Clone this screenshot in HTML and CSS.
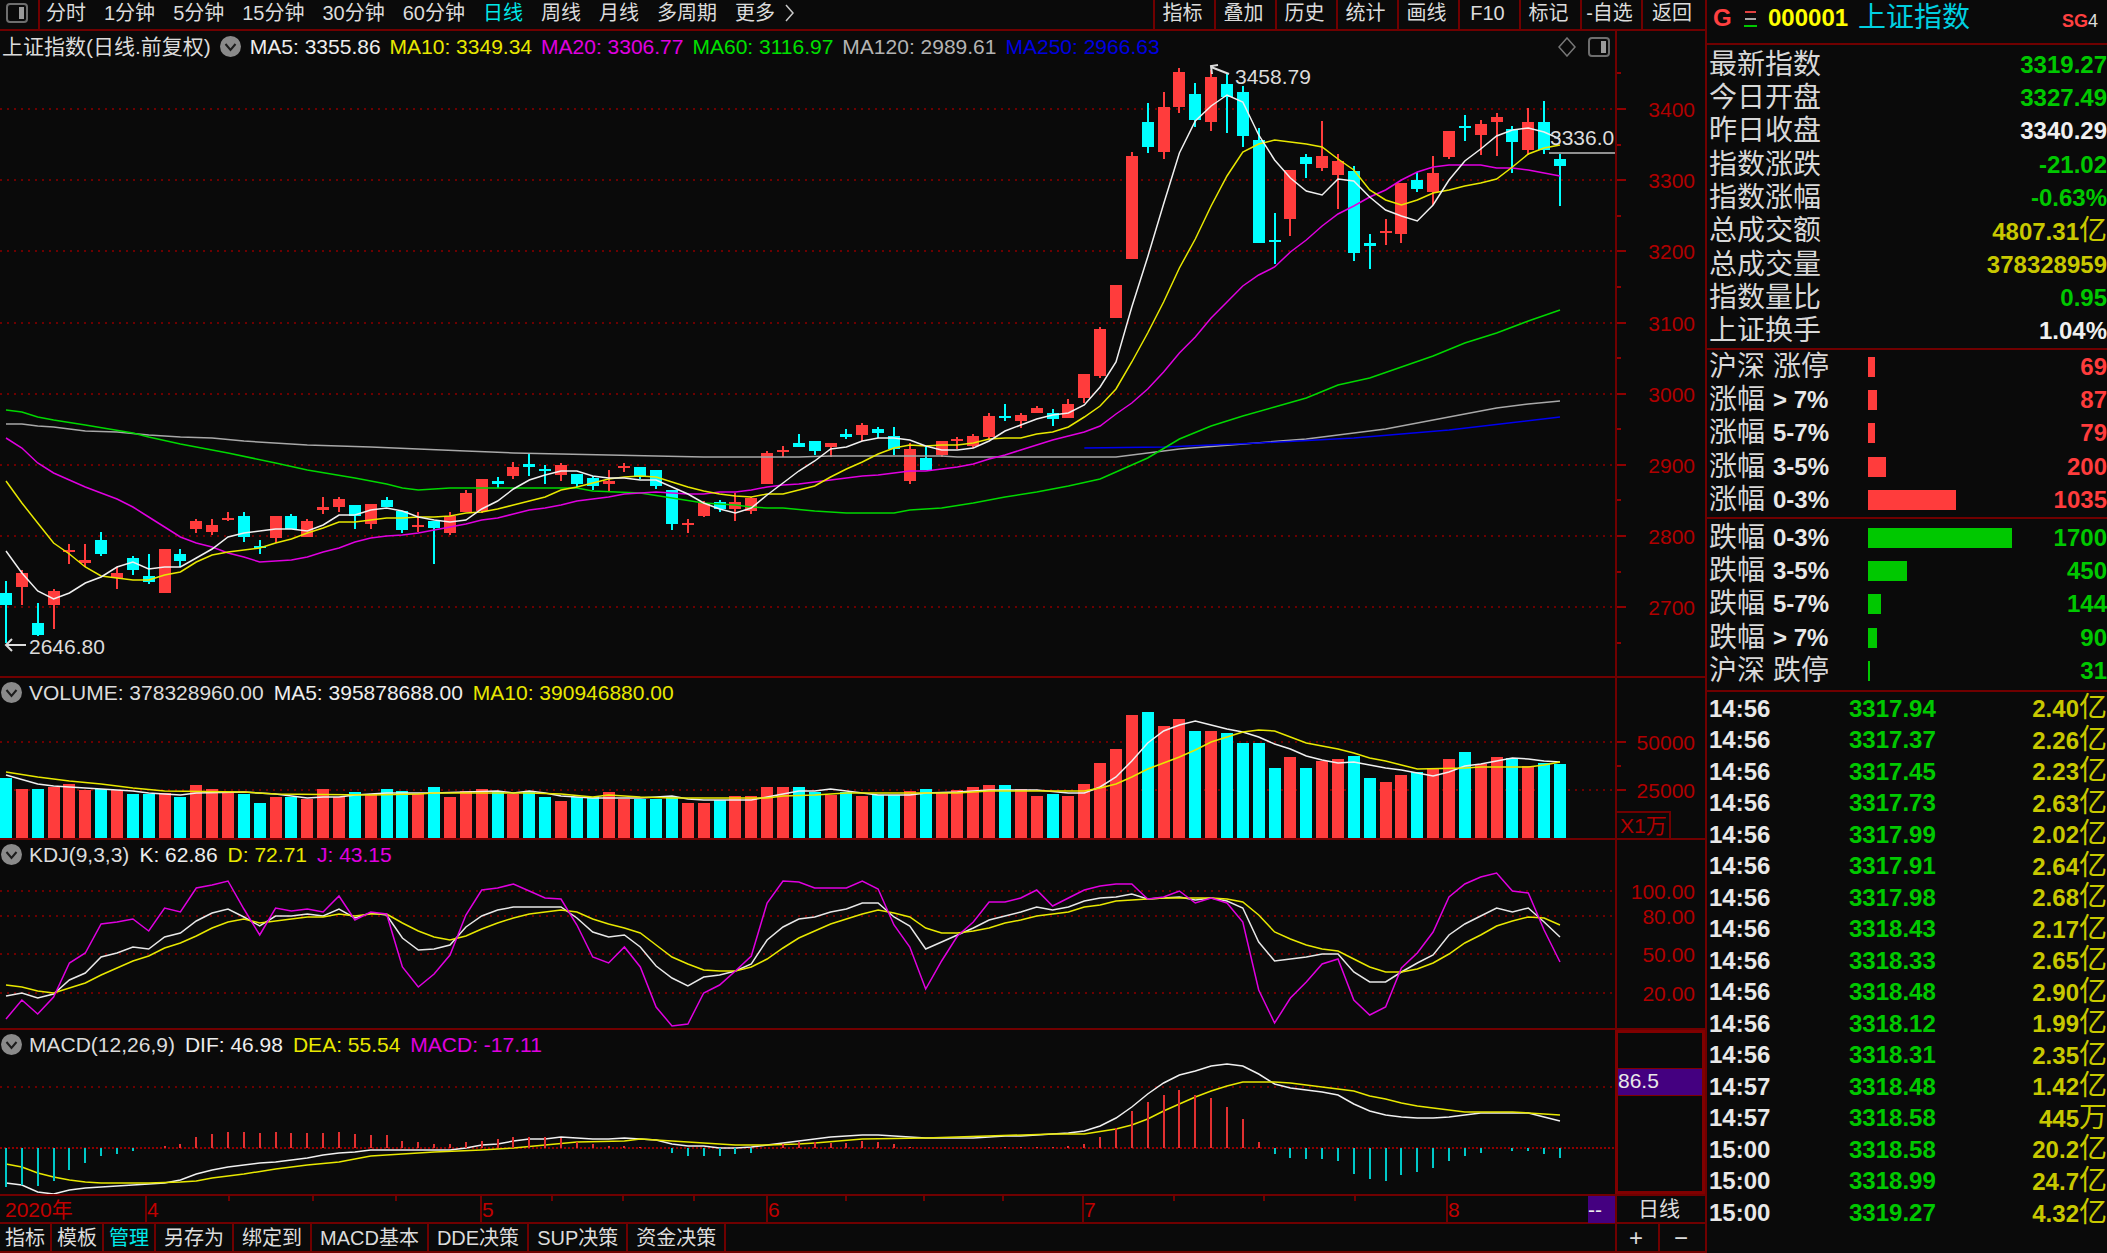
FILE: index.html
```html
<!DOCTYPE html>
<html lang="zh-CN">
<head>
<meta charset="utf-8">
<title>上证指数 000001 日线</title>
<link rel="stylesheet" href="styles.css">
</head>
<body>
<svg class="defs" aria-hidden="true">
  <symbol id="chevron" viewBox="0 0 21 21"><circle cx="10.500" cy="10.500" r="10.500" fill="#8a8a8a"/><path d="M5.500 8l5 6 5-6" fill="none" stroke="#1c1c1c" stroke-width="2"/></symbol>
  <symbol id="panel" viewBox="0 0 22 20"><rect x="1" y="1" width="20" height="18" rx="3" fill="none" stroke="#6e6e6e" stroke-width="2"/><rect x="13" y="4" width="5" height="12" fill="#9a9a9a"/></symbol>
</svg>
<div class="app">
  <main class="workspace">
    <header class="toolbar">
      <button class="toggle" aria-label="侧栏"><svg width="22" height="20"><use href="#panel"/></svg></button>
      <nav class="periods">
        <button>分时</button><button>1分钟</button><button>5分钟</button><button>15分钟</button><button>30分钟</button><button>60分钟</button><button class="active">日线</button><button>周线</button><button>月线</button><button>多周期</button><button class="more">更多<svg width="10" height="18" viewBox="0 0 10 18"><path d="M1 1l7 8-7 8" fill="none" stroke="#c8c8c8" stroke-width="1.500"/></svg></button>
      </nav>
      <nav class="tools">
        <button>指标</button><button>叠加</button><button>历史</button><button>统计</button><button>画线</button><button>F10</button><button>标记</button><button>-自选</button><button>返回</button>
      </nav>
    </header>

    <section class="panel">
      <div class="plot" id="price">
        <div class="legend legend-main">
          <span>上证指数(日线.前复权)</span><svg width="21" height="21"><use href="#chevron"/></svg>
          <span class="white">MA5: 3355.86</span><span class="yellow">MA10: 3349.34</span><span class="magenta">MA20: 3306.77</span><span class="green">MA60: 3116.97</span><span class="gray">MA120: 2989.61</span><span class="blue">MA250: 2966.63</span>
          <span class="view-icons"><svg width="18" height="20" viewBox="0 0 18 20"><path d="M9 1l8 9-8 9-8-9z" fill="none" stroke="#777" stroke-width="1.500"/></svg><svg width="22" height="20"><use href="#panel"/></svg></span>
        </div>
      </div>
      <div class="axis" id="price-axis"></div>
    </section>

    <section class="panel">
      <div class="plot" id="volume">
        <div class="legend"><svg width="21" height="21"><use href="#chevron"/></svg><span class="first">VOLUME: 378328960.00</span><span class="white">MA5: 395878688.00</span><span class="yellow">MA10: 390946880.00</span></div>
      </div>
      <div class="axis" id="volume-axis"><span class="unit">X1万</span></div>
    </section>

    <section class="panel">
      <div class="plot" id="kdj">
        <div class="legend"><svg width="21" height="21"><use href="#chevron"/></svg><span class="first">KDJ(9,3,3)</span><span class="white">K: 62.86</span><span class="yellow">D: 72.71</span><span class="magenta">J: 43.15</span></div>
      </div>
      <div class="axis" id="kdj-axis"></div>
    </section>

    <section class="panel">
      <div class="plot" id="macd">
        <div class="legend"><svg width="21" height="21"><use href="#chevron"/></svg><span class="first">MACD(12,26,9)</span><span class="white">DIF: 46.98</span><span class="yellow">DEA: 55.54</span><span class="magenta">MACD: -17.11</span></div>
      </div>
      <div class="axis selected"><span class="cursor-value">86.5</span></div>
    </section>

    <div class="dates">
      <div class="months">
        <div class="month start">2020年</div>
        <div class="month"><b>4</b><i></i><i></i><i></i></div>
        <div class="month"><b>5</b><i></i><i></i><i></i></div>
        <div class="month"><b>6</b><i></i><i></i><i></i></div>
        <div class="month"><b>7</b><i></i><i></i><i></i></div>
        <div class="month"><b>8</b></div>
        <div class="cursor-date">--</div>
      </div>
      <div class="period-name">日线</div>
    </div>

    <footer class="bottom">
      <nav class="tabs">
        <button class="tight">指标</button><button class="tight">模板</button><button class="tight active">管理</button><button>另存为</button><button>绑定到</button><button>MACD基本</button><button>DDE决策</button><button>SUP决策</button><button>资金决策</button>
      </nav>
      <div class="zoom"><button aria-label="放大">+</button><button aria-label="缩小">−</button></div>
    </footer>
  </main>

  <aside class="quote">
    <header class="quote-head">
      <b class="mark">G</b>
      <svg width="13" height="17" viewBox="0 0 13 17"><path d="M1 2h11" stroke="#e04040" stroke-width="2"/><path d="M1 9h11" stroke="#aaa" stroke-width="2"/><path d="M0 16h13" stroke="#00c800" stroke-width="2"/></svg>
      <b class="code">000001</b><span class="name">上证指数</span><span class="sg"><b>SG</b>4</span>
    </header>
    <dl class="stats">
      <div><dt>最新指数</dt><dd class="down">3319.27</dd></div>
      <div><dt>今日开盘</dt><dd class="down">3327.49</dd></div>
      <div><dt>昨日收盘</dt><dd>3340.29</dd></div>
      <div><dt>指数涨跌</dt><dd class="down">-21.02</dd></div>
      <div><dt>指数涨幅</dt><dd class="down">-0.63%</dd></div>
      <div><dt>总成交额</dt><dd class="sum">4807.31<span>亿</span></dd></div>
      <div><dt>总成交量</dt><dd class="sum">378328959</dd></div>
      <div><dt>指数量比</dt><dd class="down">0.95</dd></div>
      <div><dt>上证换手</dt><dd>1.04%</dd></div>
    </dl>
    <dl class="spread rise">
      <div><dt>沪深<span>涨停</span></dt><dd><i style="width:7px"></i>69</dd></div>
      <div><dt>涨幅<b>&gt; 7%</b></dt><dd><i style="width:9px"></i>87</dd></div>
      <div><dt>涨幅<b>5-7%</b></dt><dd><i style="width:7px"></i>79</dd></div>
      <div><dt>涨幅<b>3-5%</b></dt><dd><i style="width:18px"></i>200</dd></div>
      <div><dt>涨幅<b>0-3%</b></dt><dd><i style="width:88px"></i>1035</dd></div>
    </dl>
    <dl class="spread fall">
      <div><dt>跌幅<b>0-3%</b></dt><dd><i style="width:144px"></i>1700</dd></div>
      <div><dt>跌幅<b>3-5%</b></dt><dd><i style="width:39px"></i>450</dd></div>
      <div><dt>跌幅<b>5-7%</b></dt><dd><i style="width:13px"></i>144</dd></div>
      <div><dt>跌幅<b>&gt; 7%</b></dt><dd><i style="width:9px"></i>90</dd></div>
      <div><dt>沪深<span>跌停</span></dt><dd><i style="width:2px"></i>31</dd></div>
    </dl>
    <table class="trades"><tbody>
      <tr><td>14:56</td><td>3317.94</td><td>2.40<span>亿</span></td></tr>
      <tr><td>14:56</td><td>3317.37</td><td>2.26<span>亿</span></td></tr>
      <tr><td>14:56</td><td>3317.45</td><td>2.23<span>亿</span></td></tr>
      <tr><td>14:56</td><td>3317.73</td><td>2.63<span>亿</span></td></tr>
      <tr><td>14:56</td><td>3317.99</td><td>2.02<span>亿</span></td></tr>
      <tr><td>14:56</td><td>3317.91</td><td>2.64<span>亿</span></td></tr>
      <tr><td>14:56</td><td>3317.98</td><td>2.68<span>亿</span></td></tr>
      <tr><td>14:56</td><td>3318.43</td><td>2.17<span>亿</span></td></tr>
      <tr><td>14:56</td><td>3318.33</td><td>2.65<span>亿</span></td></tr>
      <tr><td>14:56</td><td>3318.48</td><td>2.90<span>亿</span></td></tr>
      <tr><td>14:56</td><td>3318.12</td><td>1.99<span>亿</span></td></tr>
      <tr><td>14:56</td><td>3318.31</td><td>2.35<span>亿</span></td></tr>
      <tr><td>14:57</td><td>3318.48</td><td>1.42<span>亿</span></td></tr>
      <tr><td>14:57</td><td>3318.58</td><td>445<span>万</span></td></tr>
      <tr><td>15:00</td><td>3318.58</td><td>20.2<span>亿</span></td></tr>
      <tr><td>15:00</td><td>3318.99</td><td>24.7<span>亿</span></td></tr>
      <tr><td>15:00</td><td>3319.27</td><td>4.32<span>亿</span></td></tr>
    </tbody></table>
  </aside>
</div>
<script src="chart.js"></script>
</body>
</html>
```

FILE: styles.css
```css
* { box-sizing: border-box; }

body {
  margin: 0;
  background: #0a0a0a;
  color: #dcdcdc;
  font: 21px/1 "Liberation Sans", "Noto Sans CJK SC", sans-serif;
  overflow-x: hidden;
}

button {
  margin: 0;
  padding: 0;
  border: 0;
  background: none;
  color: inherit;
  font: inherit;
  font-size: 20px;
  white-space: nowrap;
}

dl, dd { margin: 0; }
svg { display: block; flex: none; }
.defs { position: absolute; width: 0; height: 0; }

.white { color: #eeeeee; }
.yellow { color: #e8e800; }
.magenta { color: #e000e0; }
.green { color: #00e000; }
.gray { color: #b4b4b4; }
.blue { color: #0000e0; }
.active { color: #00e8e8; }

.app {
  display: grid;
  grid-template-columns: minmax(0, 1fr) 402px;
  min-height: 100vh;
}

.workspace {
  display: grid;
  grid-template-rows: 31px 647fr 162fr 190fr 166fr 28px 29px;
  min-width: 0;
}

/* top toolbar */
.toolbar {
  display: flex;
  justify-content: space-between;
  border-bottom: 2px solid #700000;
  overflow: hidden;
}
.toggle {
  width: 40px;
  padding: 0 0 4px 6px;
  border-right: 2px solid #700000;
}
.periods {
  display: flex;
  align-items: center;
  gap: 18px;
  flex: 1;
  padding: 0 6px 4px;
}
.more { display: flex; align-items: center; gap: 10px; }
.tools {
  display: grid;
  grid-template-columns: repeat(8, 61px) 64px;
}
.tools button { border-left: 2px solid #700000; padding: 0 4px 4px 0; }

/* chart panels */
.panel {
  display: grid;
  grid-template-columns: minmax(0, 1fr) 90px;
  border-bottom: 2px solid #700000;
}
.plot { position: relative; overflow: hidden; }
.chart {
  position: absolute;
  inset: 0;
  width: 100%;
  height: 100%;
}
.chart * { vector-effect: non-scaling-stroke; }
.chart polyline { fill: none; stroke-width: 1.500; }
.grid { stroke: #6c0000; stroke-width: 2; stroke-dasharray: 2 5; }
.zero { stroke: #900000; stroke-width: 2; stroke-dasharray: 2 2; }
.up { fill: #ff3c3c; stroke: none; }
.dn { fill: #00ffff; stroke: none; }
.hist-up { stroke: #e03030; stroke-width: 2; }
.hist-dn { stroke: #00c8c8; stroke-width: 2; }
.pointer { fill: none; stroke: #dcdcdc; stroke-width: 2; }
.last { stroke: #909090; stroke-width: 2; }
.note {
  position: absolute;
  transform: translateY(-50%);
}

.legend {
  position: relative;
  z-index: 1;
  display: flex;
  align-items: center;
  gap: 10px;
  height: 28px;
  padding-left: 1px;
  white-space: nowrap;
}
.legend-main { gap: 9px; height: 31px; padding-left: 2px; }
.legend .first { margin-left: -3px; }
.view-icons {
  display: flex;
  gap: 12px;
  margin-left: auto;
  padding-right: 5px;
}

.axis {
  position: relative;
  border-left: 2px solid #700000;
  color: #b00000;
}
.axis .value {
  position: absolute;
  right: 10px;
  transform: translateY(-50%);
}
.axis .tick {
  position: absolute;
  left: 0;
  width: 9px;
  height: 2px;
  margin-top: -1px;
  background: #900000;
}
.axis .minor { width: 4px; }
.unit {
  position: absolute;
  left: 0;
  bottom: 0;
  width: 54px;
  height: 27px;
  padding: 2px 0 0 3px;
  border: 2px solid #700000;
  border-width: 2px 2px 0 0;
  white-space: nowrap;
}
.selected { border: 3px solid #800000; }
.cursor-value {
  display: block;
  height: 28px;
  margin-top: 35px;
  border-block: 1px solid #800000;
  background: #440080;
  color: #e8e8e8;
  line-height: 23px;
}

/* date axis */
.dates, .bottom {
  display: grid;
  grid-template-columns: minmax(0, 1fr) 90px;
  border-bottom: 2px solid #700000;
}
.months {
  display: grid;
  grid-template-columns: 145fr 335fr 286fr 316fr 364fr 142fr 27px;
  color: #c00000;
}
.month {
  display: grid;
  grid-template-columns: repeat(4, 1fr);
  border-left: 2px solid #700000;
  position: relative;
}
.month.start { display: block; border: 0; padding: 3px 5px; }
.month b { position: absolute; left: 0; top: 3px; font-weight: 400; }
.month i { height: 5px; border-right: 2px solid #700000; }
.cursor-date { background: #440080; color: #eee; padding-top: 3px; }
.period-name {
  padding-right: 4px;
  border-left: 2px solid #700000;
  line-height: 26px;
  text-align: center;
}

/* bottom tabs */
.tabs { display: flex; }
.tabs button { padding: 0 8px; border-right: 2px solid #700000; }
.tabs .tight { padding: 0 5px; }
.zoom { display: grid; grid-template-columns: 43px 1fr; }
.zoom button { border-left: 2px solid #700000; padding-right: 3px; font-size: 24px; }

/* quote sidebar */
.quote {
  border-left: 2px solid #700000;
  overflow: hidden;
  font-size: 24px;
}
.quote-head {
  display: flex;
  align-items: center;
  height: 45px;
  padding: 0 9px 7px 6px;
  border-bottom: 2px solid #700000;
}
.mark { width: 31px; color: #ff4040; }
.code { margin-left: 11px; color: #ffff00; }
.name { margin-left: 10px; color: #00d0e0; font-size: 28px; }
.sg { margin-left: auto; font-size: 18px; padding-top: 6px; }
.sg b { color: #ff4040; }

.stats, .spread {
  display: grid;
  grid-auto-rows: 1fr;
  padding-left: 2px;
  border-bottom: 2px solid #700000;
}
.stats { height: 305px; padding-top: 3px; }
.rise { height: 169px; }
.fall { height: 173px; padding-top: 2px; padding-bottom: 2px; }
.stats div { display: flex; align-items: center; justify-content: space-between; }
.stats dt, .spread dt { font-size: 28px; color: #d8d8d8; white-space: nowrap; }
.stats dd, .spread dd { font-weight: 700; color: #f0f0f0; }
.stats .down { color: #00c800; }
.stats .sum { color: #c8c800; }
.sum span, .trades span { font-size: 28px; font-weight: 400; line-height: 24px; }
.spread div { display: grid; grid-template-columns: 159px 1fr; align-items: center; }
.spread dt { display: flex; align-items: center; gap: 8px; }
.spread b { font-size: 24px; color: #e8e8e8; }
.spread dd { display: flex; align-items: center; justify-content: space-between; }
.spread dd i { height: 20px; background: currentColor; }
.rise dd { color: #ff3c3c; }
.fall dd { color: #00c800; }

.trades {
  width: 100%;
  height: 536px;
  margin-top: 1px;
  border-collapse: collapse;
  font-weight: 700;
}
.trades td { padding: 0; line-height: 24px; white-space: nowrap; }
.trades td:nth-child(1) { width: 142px; padding-left: 2px; color: #e8e8e8; }
.trades td:nth-child(2) { color: #00c800; }
.trades td:nth-child(3) { color: #c8c800; text-align: right; }
```

FILE: chart.js
```js
// Plot space: 1615 units wide, y grows downwards; 99 trading days.
const W = 1615;
const X = i => 6 + i * 15.857;

// Each day: colour (r up, c down), high, body top, body bottom, low.
const candles = `c581,593,605,643 r570,573,587,605 c603,623,635,636 r589,591,605,629 r544,550,552,564
r544,560,563,567 c532,540,554,556 r567,573,578,589 c556,558,570,575 c554,576,582,584 r549,549,593,593
c549,554,561,567 r519,521,529,533 r519,525,532,535 r512,518,519,521 c512,516,537,542 c540,546,548,554
r516,516,538,543 c514,516,529,529 r519,521,537,537 r497,507,510,514 r497,499,507,512 c505,505,516,529
r504,504,524,529 c497,500,507,507 c511,511,530,533 r512,525,526,532 c521,521,528,564 r512,516,533,535
r490,493,512,512 r479,479,511,513 c477,481,484,488 r462,467,476,479 c454,464,467,476 c465,469,470,484
r463,465,475,481 c474,474,484,487 c476,478,486,490 r470,481,484,491 r463,466,467,472 c467,467,476,479
c470,470,486,489 c490,490,524,530 r519,523,524,533 r501,503,516,517 c500,502,509,512 r493,502,509,521
r497,498,511,514 r451,453,484,484 r446,450,452,457 c434,443,447,447 c441,441,451,455 r443,443,447,457
c429,434,437,439 r423,425,435,441 c427,429,433,438 c427,436,449,455 r443,449,481,484 c447,458,470,470
r441,441,455,457 r437,439,440,449 r434,436,446,448 r413,416,437,440 c404,416,418,421 r413,415,421,428
r406,408,413,413 c409,413,419,426 r399,404,418,418 r374,374,398,403 r327,329,376,378 r285,285,318,318
r152,156,259,259 c103,122,147,153 r92,107,152,159 r68,72,107,113 c83,94,120,127 r70,77,122,131
c73,84,97,133 c86,92,136,147 c128,140,243,243 c213,240,241,264 r170,170,219,236 c154,157,164,178
r121,156,168,171 r154,161,175,209 c166,171,253,261 c234,243,246,269 r219,231,232,245 r183,183,234,243
c172,180,189,192 r156,173,192,205 r131,131,157,159 c115,126,127,141 r120,124,135,155 r113,117,122,156
c126,129,142,173 r108,122,150,155 c101,122,150,154 c153,159,166,206`.split(/\s+/)
  .map(s => [s[0] === 'r' ? 'up' : 'dn', ...s.slice(1).split(',').map(Number)]);

const volumes = `778 789 789 787 784 790 789 790 794 794 793 797 785 789 793 794 803 797 797 799 789 797
792 794 789 791 794 787 797 791 789 792 794 792 797 801 797 797 792 799 799 799 797 803 803 800 796 796
787 787 787 792 795 792 796 795 795 791 789 793 790 787 785 785 789 796 794 796 784 763 749 715 712 726
719 731 731 733 743 743 768 757 768 761 759 756 778 782 775 772 768 759 752 764 757 758 766 763 764`
  .split(/\s+/).map(Number);

const histogram = `1187 1185 1186 1181 1170 1163 1156 1154 1151 1148 1146 1144 1137 1134 1132 1132 1133
1132 1133 1133 1133 1132 1134 1135 1135 1141 1142 1144 1144 1142 1141 1139 1137 1137 1137 1138 1142 1144
1146 1146 1147 1148 1153 1156 1156 1156 1154 1153 1148 1144 1142 1142 1143 1143 1141 1142 1144 1147 1148
1148 1148 1148 1147 1147 1147 1147 1147 1146 1144 1137 1128 1111 1102 1095 1090 1095 1098 1107 1119 1142
1154 1158 1159 1159 1161 1174 1179 1181 1175 1172 1168 1161 1156 1153 1148 1151 1151 1154 1158`
  .split(/\s+/).map(Number);

// Lines are lists of y, one a day; "day:y" skips ahead to that day.
const lines = {
  ma5: `551 573 591 599 593 583 577 567 562 569 567 567 558 549 537 533 531 529 529 531 525 515 515 510 508
511 517 520 522 520 509 501 489 480 475 471 471 476 478 478 480 480 487 494 503 509 513 508 495 483 471 461
449 447 441 438 438 440 446 450 450 448 441 431 425 419 415 413 405 387 362 307 257 204 153 121 106 95 102
135 160 178 191 195 179 181 197 210 216 221 205 180 161 149 136 130 128 132 139`,
  ma10: `481 503 523 543 554 567 576 578 580 580 575 572 562 555 552 550 548 543 539 533 528 522 522 520 518
518 517 517 516 513 512 509 505 501 497 490 487 483 479 477 476 477 482 487 491 494 496 497 494 494 490 486
477 469 462 454 448 445 446 445 445 443 439 438 438 434 432 427 417 406 389 362 333 302 268 239 206 176 152
144 140 142 144 147 159 170 190 200 205 200 193 190 186 183 179 167 154 148 145`,
  ma20: `438 448 463 473 480 487 493 499 507 517 527 537 543 547 553 557 562 561 560 557 552 548 542 538 536
535 533 530 527 524 520 518 514 510 508 505 501 499 497 494 493 492 493 494 494 492 492 490 487 485 484 482
480 478 476 475 473 471 471 469 467 464 459 455 450 445 440 436 432 426 414 403 389 372 353 337 318 302 286
275 267 252 240 226 214 206 197 190 180 172 167 165 165 165 168 168 170 173 176`,
  ma60: `410 412 417 420 5:425 8:433 437 11:444 14:453 17:463 19:470 22:478 24:484 488 490 489 488 33:488
35:488 488 491 40:493 42:498 44:503 46:505 507 508 508 51:511 53:513 56:513 510 59:508 61:503 63:497 65:492
67:486 69:479 72:458 74:439 76:426 78:416 80:407 82:398 84:385 86:378 88:367 90:356 92:343 94:333 96:321 98:310`,
  ma120: `424 424 426 427 429 431 7:432 9:435 11:437 13:438 15:441 19:445 23:447 26:449 29:451 32:453 38:455
44:457 50:457 52:456 59:456 457 70:457 74:449 82:439 87:429 92:414 94:408 96:404 98:401`,
  ma250: `68:448 73:447 79:443 85:438 91:430 98:417`,
  vol5: `775 2:784 786 5:788 789 8:791 793 11:795 793 15:792 17:794 796 798 797 797 795 24:793 27:793
31:791 793 791 793 796 37:798 40:798 42:796 799 800 47:800 797 794 791 791 789 791 793 795 57:795 793 60:792
62:790 65:790 67:793 793 787 777 761 743 731 725 721 725 729 732 737 744 749 756 760 763 762 765 768 770 773
776 772 766 764 761 758 759 761 762`,
  vol10: `772 2:777 4:781 6:784 8:788 10:791 15:792 17:794 23:795 26:794 793 33:793 35:794 37:797 795 40:797
42:798 48:798 796 51:795 53:793 60:793 62:791 68:791 788 784 777 769 763 757 750 742 737 732 730 731 737 743
746 749 753 758 761 765 769 92:768 767 96:767 765 762`,
  j: `1019 1000 1014 997 963 953 924 922 919 931 908 912 888 885 881 909 935 908 911 909 912 896 920 912 914
967 987 974 955 915 890 888 884 891 898 899 925 957 963 947 967 1007 1026 1024 993 985 971 956 903 881 882
888 888 888 881 889 925 947 989 961 936 922 902 902 898 890 906 898 890 886 884 884 899 897 891 903 898 903
922 990 1023 998 982 964 959 1000 1015 1007 968 953 932 897 884 877 873 891 893 930 962`,
  k: `996 993 998 994 980 973 957 953 947 949 937 933 921 913 909 917 926 916 916 914 916 909 918 913 915
938 950 949 945 927 916 910 907 907 907 907 918 932 937 935 947 966 978 986 977 975 971 964 940 927 919 917
912 909 903 903 917 926 949 942 935 928 920 916 912 907 910 907 901 898 897 894 899 898 897 900 898 901 908
942 961 959 957 954 954 972 982 982 972 963 955 935 924 916 908 912 908 922 937`,
  d: `985 987 991 993 988 983 975 968 961 956 948 943 936 928 922 919 923 921 919 917 917 914 916 914 914
923 931 937 940 936 929 923 918 914 912 910 912 919 924 928 933 945 957 964 970 971 971 967 959 948 938 931
924 919 914 910 913 917 928 933 933 931 928 923 920 916 914 912 907 905 901 900 899 898 898 898 898 899 902
915 932 939 945 949 951 959 967 972 972 969 963 954 943 935 926 921 917 918 925`,
  dif: `1183 1185 1192 1194 1190 1188 1187 8:1185 10:1183 1180 1174 1170 1167 1165 1163 1162 1160 1158 1155
1153 1152 1150 28:1150 1148 1145 1144 1141 1139 1139 1137 1138 1139 1139 1138 1139 1140 1144 1146 1146 1148
1148 1147 1145 1143 1141 1139 1137 1136 1135 1135 1136 1137 1138 1138 1138 1138 1137 1136 1136 1135 1134 1133
1131 1126 1118 1107 1094 1083 1075 1071 1066 1064 1066 1074 1084 1088 1090 1092 1095 1104 1111 1115 1117 1118
1118 1117 1115 1113 96:1113 1117 1121`,
  dea: `1164 1167 1173 1177 1180 1182 1183 9:1183 11:1182 1181 1178 15:1174 17:1169 19:1165 21:1162 23:1156
25:1154 27:1152 30:1150 32:1148 34:1145 36:1142 39:1141 1139 42:1141 44:1143 46:1145 48:1145 50:1144 1143
54:1139 58:1138 66:1134 68:1134 70:1129 1125 1119 1111 1104 1097 1091 1086 1082 80:1082 1083 1085 1087 1089
1091 1096 1099 1103 1106 1108 1110 1112 95:1112 1113 1114 1115`
};

function line(name, colour) {
  let day = -1;
  const points = lines[name].split(/\s+/).map(part => {
    const [a, b] = part.split(':');
    day = b ? +a : day + 1;
    return `${X(day).toFixed(1)},${b || a}`;
  });
  return `<polyline points="${points.join(' ')}" stroke="${colour}"/>`;
}
const bar = (x, y, w, h, cls) => `<rect x="${x}" y="${y}" width="${w}" height="${h}" class="${cls}"/>`;
const rule = (y, cls) => `<line x1="0" x2="${W}" y1="${y}" y2="${y}" class="${cls}"/>`;

function draw(id, top, height, marks) {
  document.getElementById(id).insertAdjacentHTML('beforeend',
    `<svg class="chart" viewBox="0 ${top} ${W} ${height}" preserveAspectRatio="none">${marks}</svg>`);
}
function note(id, x, y, text) {
  document.getElementById(id).insertAdjacentHTML('beforeend',
    `<span class="note" style="left:${x / W * 100}%;top:${(y - 31) / 645 * 100}%">${text}</span>`);
}
function axis(id, top, height, labels, minors, ticks) {
  const at = y => `style="top:${(y - top) / height * 100}%"`;
  document.getElementById(id).insertAdjacentHTML('beforeend',
    labels.map(([y, text]) => `${ticks ? `<i class="tick" ${at(y)}></i>` : ''}<span class="value" ${at(y)}>${text}</span>`).join('') +
    minors.map(y => `<i class="tick minor" ${at(y)}></i>`).join(''));
}

const priceLevels = [3400, 3300, 3200, 3100, 3000, 2900, 2800, 2700].map(p => [Math.round(109 + (3400 - p) * 0.7121), p]);
draw('price', 31, 645,
  priceLevels.map(([y]) => rule(y, 'grid')).join('') +
  candles.map(([cls, high, top, bottom, low], i) => {
    const x = Math.round(X(i));
    return bar(x - 1, high, 2, low - high, cls) + bar(x - 6, top, 12, Math.max(bottom - top, 2), cls);
  }).join('') +
  line('ma120', '#a8a8a8') + line('ma250', '#0000f0') + line('ma60', '#00d800') +
  line('ma20', '#e000e0') + line('ma10', '#e8e800') + line('ma5', '#f0f0f0') +
  '<line x1="1549" x2="1615" y1="153" y2="153" class="last"/>' +
  '<path class="pointer" d="M26 645H6M12 639L6 645L12 651M1229 74L1211 67M1218 65L1211 66L1212 74"/>');
note('price', 29, 646, '2646.80');
note('price', 1235, 76, '3458.79');
note('price', 1550, 137, '3336.0');
axis('price-axis', 31, 645, priceLevels, [73, 145, 216, 287, 358, 429, 500, 572, 643], true);

draw('volume', 678, 160,
  rule(742, 'grid') + rule(790, 'grid') +
  volumes.map((y, i) => bar(Math.round(X(i)) - 6, y, 12, 838 - y, candles[i][0])).join('') +
  line('vol5', '#f0f0f0') + line('vol10', '#e8e800'));
axis('volume-axis', 678, 160, [[742, '50000'], [790, '25000']], [766], true);

draw('kdj', 840, 188,
  [891, 916, 954, 993].map(y => rule(y, 'grid')).join('') +
  line('k', '#e8e8e8') + line('d', '#e8e800') + line('j', '#e000e0'));
axis('kdj-axis', 840, 188, [[891, '100.00'], [916, '80.00'], [954, '50.00'], [993, '20.00']], [], false);

draw('macd', 1030, 164,
  rule(1087, 'grid') + rule(1148, 'zero') +
  line('dif', '#f0f0f0') + line('dea', '#e8e800') +
  histogram.map((y, i) => {
    const x = Math.round(X(i));
    return y === 1148 ? '' : `<line x1="${x}" x2="${x}" y1="1148" y2="${y}" class="hist-${y < 1148 ? 'up' : 'dn'}"/>`;
  }).join(''));
```
